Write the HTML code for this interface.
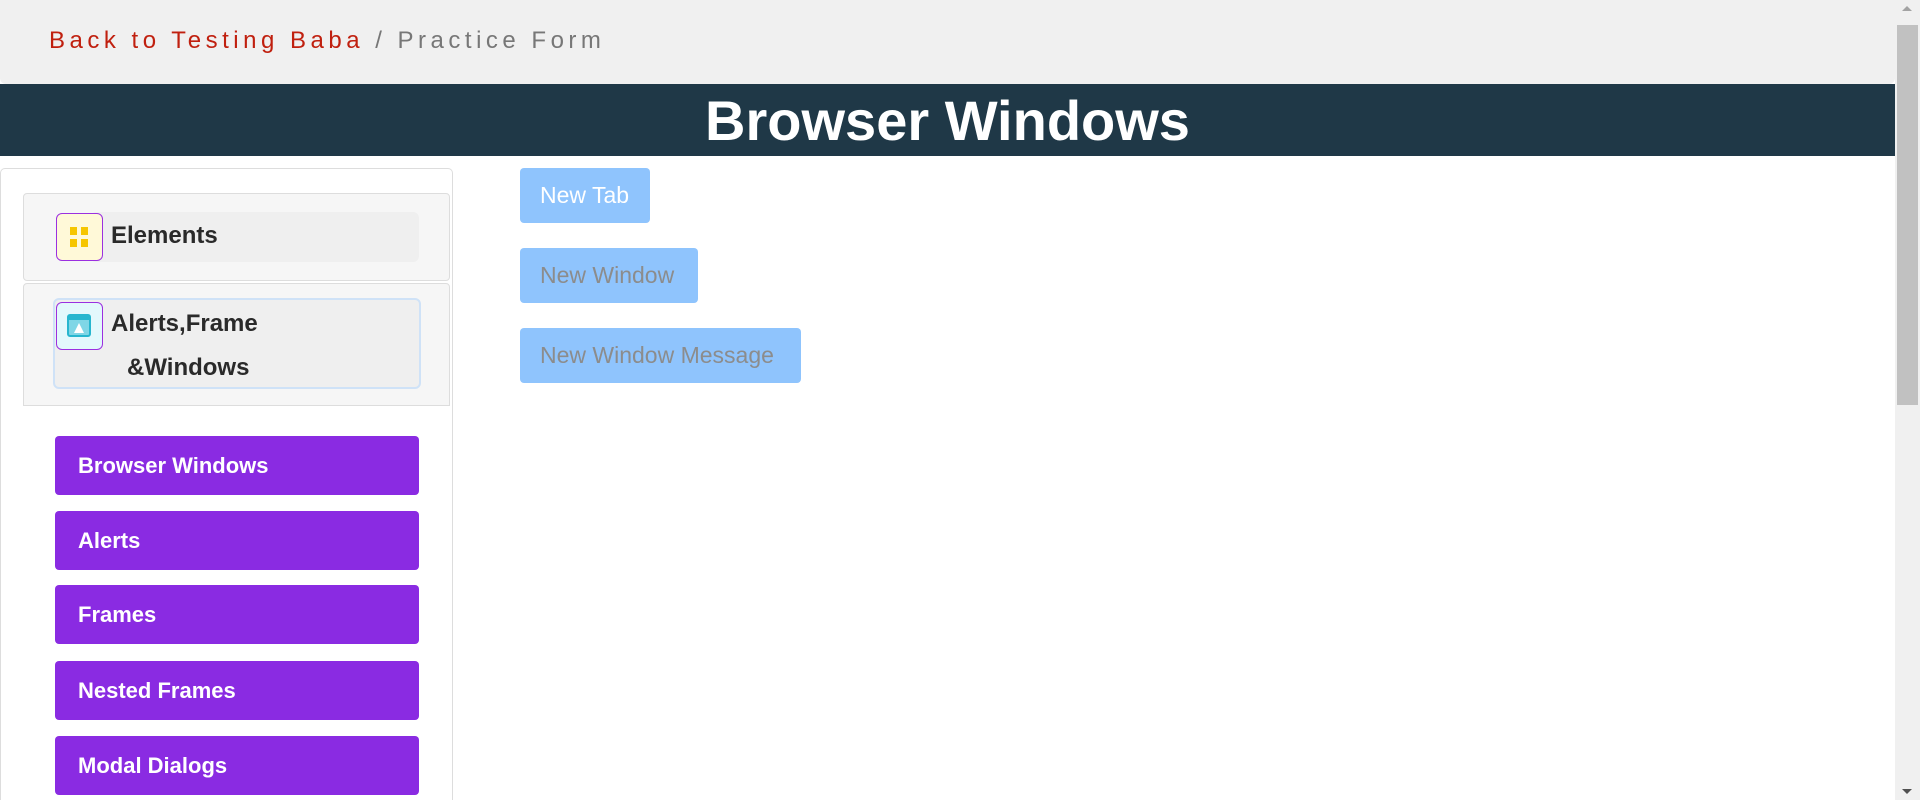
<!DOCTYPE html>
<html><head><meta charset="utf-8"><style>
*{box-sizing:border-box;margin:0;padding:0}
html,body{width:1920px;height:800px;overflow:hidden}
body{background:#fff;font-family:"Liberation Sans",sans-serif;position:relative}
.top{position:absolute;left:0;top:0;width:1895px;height:84px;background:#f0f0f0;border-radius:0 0 6px 6px}
.bc{position:absolute;left:49px;top:27px;font-size:24px;letter-spacing:4.5px;color:#777}
.bc .r{color:#c0200f}
.hdr{position:absolute;left:0;top:84px;width:1895px;height:72px;background:#1f3847;color:#fff;text-align:center;font-size:56px;font-weight:bold;line-height:74px}
.sb{position:absolute;left:1895px;top:0;width:25px;height:800px;background:#f0f0f0}
.thumb{position:absolute;left:2px;top:25px;width:21px;height:380px;background:#c1c1c1}
.card{position:absolute;left:0;top:168px;width:453px;height:632px;border:1px solid #ddd;border-bottom:0;border-radius:5px 5px 0 0;background:#fff}
.g{position:absolute;left:23px;width:427px;background:#f6f6f6;border:1px solid #ddd;border-radius:4px}
.in{position:absolute;background:#efefef;border-radius:6px}
.ic{position:absolute;width:47px;height:48px;border:1.5px solid #9b30e0;border-radius:6px}
.lbl{position:absolute;font-weight:bold;font-size:24px;color:#2a2a2a}
.m{position:absolute;left:55px;width:364px;height:59px;background:#8a2be2;border-radius:4px;color:#fff;font-weight:bold;font-size:22px;line-height:59px;padding-left:23px}
.b{position:absolute;left:520px;height:55px;background:#8fc4fd;border-radius:4px;font-size:23px;line-height:55px;padding-left:20px;color:#8c8c8c}
</style></head><body>
<div class="top"><div class="bc"><span class="r">Back to Testing Baba</span> / Practice Form</div></div>
<div class="hdr">Browser Windows</div>
<div class="sb"><div class="thumb"></div>
<div style="position:absolute;left:7px;top:6px;border:5px solid transparent;border-bottom-color:#a3a3a3;border-top:0"></div>
<div style="position:absolute;left:7px;bottom:6px;border:5px solid transparent;border-top-color:#505050;border-bottom:0"></div></div>
<div class="card"></div>
<div class="g" style="top:193px;height:88px"></div>
<div class="in" style="left:90px;top:212px;width:329px;height:50px"></div>
<div class="ic" style="left:56px;top:213px;background:#fff9d8">
<svg width="44" height="45" viewBox="0 0 44 45"><g fill="#f6c600"><rect x="13" y="13" width="7" height="8"/><rect x="24" y="13" width="7" height="8"/><rect x="13" y="25" width="7" height="8"/><rect x="24" y="25" width="7" height="8"/></g></svg></div>
<div class="lbl" style="left:111px;top:222px">Elements</div>
<div class="g" style="top:283px;height:123px;border-radius:4px 4px 0 0"></div>
<div class="in" style="left:53px;top:298px;width:368px;height:91px;border:2px solid #cfe2f7"></div>
<div class="ic" style="left:56px;top:302px;background:#e3f8fc">
<svg width="44" height="45" viewBox="0 0 44 45"><rect x="11" y="12" width="22" height="21" rx="2" fill="#7fd6e6" stroke="#27b6cf" stroke-width="2"/><rect x="11" y="12" width="22" height="5" fill="#27b6cf"/><path d="M22 20 L27 30 L17 30 Z" fill="#fff"/></svg></div>
<div class="lbl" style="left:111px;top:310px">Alerts,Frame</div>
<div class="lbl" style="left:127px;top:354px">&amp;Windows</div>
<div class="m" style="top:436px">Browser Windows</div>
<div class="m" style="top:511px">Alerts</div>
<div class="m" style="top:585px">Frames</div>
<div class="m" style="top:661px">Nested Frames</div>
<div class="m" style="top:736px">Modal Dialogs</div>
<div class="b" style="top:168px;width:130px;color:#fff">New Tab</div>
<div class="b" style="top:248px;width:178px">New Window</div>
<div class="b" style="top:328px;width:281px">New Window Message</div>
</body></html>
